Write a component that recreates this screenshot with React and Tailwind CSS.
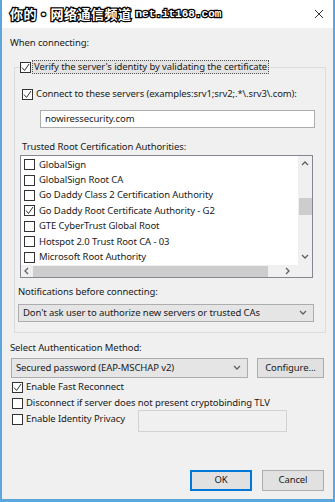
import React from "react";

function Box({ checked }) {
  return (
    <span className="w-[11px] h-[11px] shrink-0 border border-[#333] bg-white flex items-center justify-center">
      {checked && (
        <svg width="9" height="9" viewBox="0 0 9 9">
          <polyline points="1,4.5 3.5,7.5 8,1" fill="none" stroke="#333" strokeWidth="1" />
        </svg>
      )}
    </span>
  );
}

function Chevron({ dir = "down" }) {
  const pts = {
    down: "1,2 4,5 7,2",
    up: "1,5 4,2 7,5",
    left: "5,1 2,4 5,7",
    right: "2,1 5,4 2,7",
  }[dir];
  return (
    <svg width="8" height="8" viewBox="0 0 8 8">
      <polyline points={pts} fill="none" stroke="#606060" strokeWidth="1.3" />
    </svg>
  );
}

const authorities = [
  ["GlobalSign", false],
  ["GlobalSign Root CA", false],
  ["Go Daddy Class 2 Certification Authority", false],
  ["Go Daddy Root Certificate Authority - G2", true],
  ["GTE CyberTrust Global Root", false],
  ["Hotspot 2.0 Trust Root CA - 03", false],
  ["Microsoft Root Authority", false],
];

export default function App() {
  return (
    <div className="w-[335px] h-[502px] bg-[#f0f0f0] border-x-2 border-b-[3px] border-[#5ca6dc] flex flex-col overflow-hidden font-['Noto_Sans',sans-serif] text-[9.5px] tracking-[-0.1px] text-[#1a1a1a]">
      {/* title bar */}
      <div className="h-[28px] shrink-0 bg-white flex items-center pl-[8px] pr-[9px] tracking-normal">
        <span className="font-['Noto_Sans_CJK_SC',sans-serif] font-bold text-[13px] text-white [-webkit-text-stroke:2.5px_#000] [paint-order:stroke_fill] tracking-[0.5px]">
          你的•网络通信频道
        </span>
        <span className="ml-[4px] font-['Liberation_Mono',monospace] font-bold text-[11px] text-white [-webkit-text-stroke:2.5px_#000] [paint-order:stroke_fill]">
          net.it168.com
        </span>
        <svg className="ml-auto" width="10" height="10" viewBox="0 0 10 10">
          <path d="M1 1 L9 9 M9 1 L1 9" stroke="#333" strokeWidth="1" />
        </svg>
      </div>

      <div className="flex-1 flex flex-col pl-[8px] pr-[7px]">
        <div className="mt-[8px] leading-[14px]">When connecting:</div>

        <fieldset className="mt-[10px] ml-[4px] border border-[#dcdcdc] pl-[5px] pr-[10px] pb-[10px] flex flex-col">
          <legend className="h-[14px] flex items-center">
            <Box checked />
            <span className="ml-[1px] px-[1px] leading-[12px] border border-dotted border-[#555] bg-[#e3e3e3]">
              Verify the server's identity by validating the certificate
            </span>
          </legend>

          <div className="mt-[14px] ml-[2px] h-[12px] flex items-center gap-[3px]">
            <Box checked />
            <span className="leading-[12px] whitespace-nowrap">Connect to these servers (examples:srv1;srv2;.*\.srv3\.com):</span>
          </div>

          <div className="mt-[10px] ml-[20px] h-[18px] bg-white border border-[#adadad] flex items-center pl-[4px]">
            nowiressecurity.com
          </div>

          <div className="mt-[12px] ml-[2px] leading-[14px]">Trusted Root Certification Authorities:</div>

          <div className="mt-[1px] mr-[2px] h-[123px] bg-white border border-[#828790] flex flex-col">
            <div className="flex-1 flex min-h-0">
              <div className="flex-1 flex flex-col pt-[1px] pl-[3px] overflow-hidden">
                {authorities.map(([name, checked]) => (
                  <div key={name} className="h-[15.4px] flex items-center gap-[4px] whitespace-nowrap">
                    <Box checked={checked} />
                    <span>{name}</span>
                  </div>
                ))}
              </div>
              <div className="w-[14px] bg-[#f0f0f0] flex flex-col items-center">
                <div className="h-[16px] flex items-center"><Chevron dir="up" /></div>
                <div className="mt-[26px] w-[13px] h-[17px] bg-[#cdcdcd]" />
                <div className="mt-auto h-[16px] flex items-center"><Chevron dir="down" /></div>
              </div>
            </div>
            <div className="h-[12px] flex bg-[#f0f0f0]">
              <div className="flex-1 flex items-center">
                <div className="w-[12px] flex justify-center"><Chevron dir="left" /></div>
                <div className="h-[11px] w-[235px] bg-[#cdcdcd]" />
                <div className="ml-auto w-[20px] flex justify-center"><Chevron dir="right" /></div>
              </div>
              <div className="w-[14px] bg-[#f0f0f0]" />
            </div>
          </div>

          <div className="mt-[7px] -ml-[2px] leading-[14px]">Notifications before connecting:</div>

          <div className="mt-[5px] -ml-[2px] mr-[1px] h-[18px] bg-[#e5e5e5] border border-[#adadad] flex items-center pl-[4px] pr-[6px]">
            <span>Don't ask user to authorize new servers or trusted CAs</span>
            <span className="ml-auto"><Chevron /></span>
          </div>
        </fieldset>

        <div className="mt-[8px] leading-[14px]">Select Authentication Method:</div>

        <div className="mt-[3px] h-[20px] flex">
          <div className="ml-[1px] w-[237px] bg-[#e5e5e5] border border-[#adadad] flex items-center pl-[4px] pr-[6px]">
            <span>Secured password (EAP-MSCHAP v2)</span>
            <span className="ml-auto"><Chevron /></span>
          </div>
          <div className="ml-[9px] w-[67px] bg-[#e1e1e1] border border-[#adadad] flex items-center justify-center">
            Configure...
          </div>
        </div>

        <div className="mt-[1px] ml-[2px] h-[16px] flex items-center gap-[3px]">
          <Box checked />
          <span>Enable Fast Reconnect</span>
        </div>
        <div className="ml-[2px] h-[16px] flex items-center gap-[3px]">
          <Box />
          <span>Disconnect if server does not present cryptobinding TLV</span>
        </div>
        <div className="ml-[2px] flex items-start">
          <div className="w-[126px] h-[16px] flex items-center gap-[3px]">
            <Box />
            <span>Enable Identity Privacy</span>
          </div>
          <div className="-mt-[1px] w-[149px] h-[22px] bg-[#f0f0f0] border border-[#d3d3d3]" />
        </div>

        <div className="mt-auto mb-[8px] mr-[2px] flex justify-end gap-[10px]">
          <div className="w-[62px] h-[21px] bg-[#e1e1e1] border-2 border-[#0078d7] flex items-center justify-center">
            OK
          </div>
          <div className="w-[62px] h-[21px] bg-[#e1e1e1] border border-[#adadad] flex items-center justify-center">
            Cancel
          </div>
        </div>
      </div>
    </div>
  );
}
